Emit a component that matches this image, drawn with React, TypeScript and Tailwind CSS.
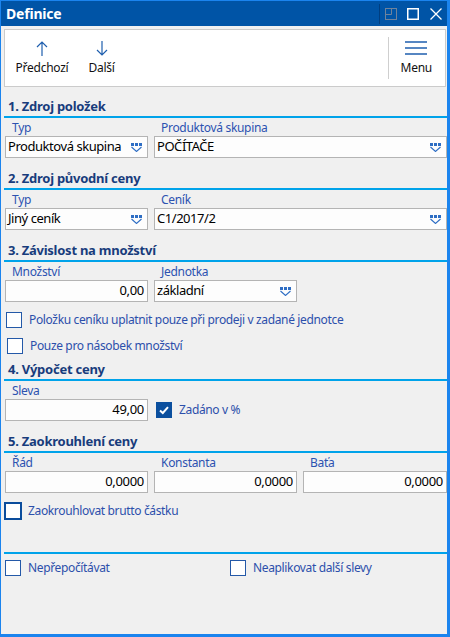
import React from "react";

const Heading = ({ title, className = "" }: { title: string; className?: string }) => (
  <div className={className}>
    <div className="h-[20px] pl-[4px] text-[13px] font-bold leading-[20px] tracking-[-0.25px] text-[#183c7c]">{title}</div>
    <div className="h-[2px] bg-[#00a3ea]" />
  </div>
);

const Label = ({ text }: { text: string }) => (
  <div className="h-[18px] pl-[7px] pt-[2px] text-[12px] leading-[16px] tracking-[-0.3px] text-[#2c52b0]">{text}</div>
);

const DropIcon = () => (
  <svg width="11" height="9" viewBox="0 0 11 9" className="shrink-0">
    <rect x="0" y="0" width="3" height="3" fill="#2d6dc4" />
    <rect x="4" y="0" width="3" height="3" fill="#2d6dc4" />
    <rect x="8" y="0" width="3" height="3" fill="#2d6dc4" />
    <polyline points="0.5,4 5.5,8.5 10.5,4" fill="none" stroke="#2d6dc4" strokeWidth="1.1" />
  </svg>
);

const Select = ({ value }: { value: string }) => (
  <div className="flex h-[22px] items-center justify-between border border-[#b4b4b4] bg-[#fdfdfd] pl-[2px] pr-[5px] text-[13px] tracking-[-0.45px] text-black">
    <span className="whitespace-nowrap">{value}</span>
    <DropIcon />
  </div>
);

const NumInput = ({ value }: { value: string }) => (
  <div className="flex h-[22px] items-center justify-end border border-[#b4b4b4] bg-[#fdfdfd] pr-[3px] text-[13px] tracking-[-0.3px] text-black">
    {value}
  </div>
);

const Check = ({
  label,
  checked = false,
  focused = false,
  className = "",
}: {
  label: string;
  checked?: boolean;
  focused?: boolean;
  className?: string;
}) => (
  <div className={`flex items-center ${className}`}>
    {checked ? (
      <div className="flex h-[16px] w-[16px] items-center justify-center bg-[#0b4f9e]">
        <svg width="12" height="12" viewBox="0 0 12 12">
          <polyline points="2,6.5 4.8,9 10,3.2" fill="none" stroke="white" strokeWidth="2" />
        </svg>
      </div>
    ) : focused ? (
      <div className="h-[18px] w-[18px] border-2 border-[#0a4c9c] bg-white" />
    ) : (
      <div className="h-[16px] w-[16px] border border-[#2459a8] bg-white" />
    )}
    <span
      className={`${focused ? "ml-[6px]" : "ml-[7px]"} whitespace-nowrap text-[12px] tracking-[-0.35px] text-[#2c4fab]`}
    >
      {label}
    </span>
  </div>
);

export default function App() {
  return (
    <div className="flex h-[637px] w-[450px] flex-col border-b-[3px] border-l border-r-[3px] border-t border-[#1b84ee] bg-[#f0f0f0] font-['Noto_Sans',sans-serif]">
      {/* Title bar */}
      <div className="flex h-[25px] items-center bg-[#0054a6]">
        <span className="pl-[5px] text-[14px] font-bold tracking-[-0.2px] text-white">Definice</span>
        <div className="ml-auto flex h-full items-center pr-[5px]">
          <div className="h-[20px] w-px bg-[#003e80]" />
          <svg width="12" height="12" viewBox="0 0 12 12" className="ml-[5px]">
            <rect x="0.5" y="0.5" width="11" height="11" fill="none" stroke="#6f839c" />
            <polyline points="6.5,0.5 6.5,6.5 0.5,6.5" fill="none" stroke="#6f839c" />
          </svg>
          <svg width="12" height="12" viewBox="0 0 12 12" className="ml-[10px]">
            <rect x="0.75" y="0.75" width="10.5" height="10.5" fill="none" stroke="white" strokeWidth="1.5" />
          </svg>
          <svg width="12" height="12" viewBox="0 0 12 12" className="ml-[11px]">
            <path d="M0.5 0.5 L11.5 11.5 M11.5 0.5 L0.5 11.5" stroke="white" strokeWidth="1.3" />
          </svg>
        </div>
      </div>

      <div className="flex flex-col pl-[3px]">
        {/* Toolbar */}
        <div className="mr-[1px] mt-[3px] flex h-[58px] items-center border border-[#cbcbcb] bg-white text-[12px] tracking-[-0.25px] text-[#111]">
          <div className="ml-[11px] flex w-[52px] flex-col items-center">
            <svg width="12" height="15" viewBox="0 0 12 15">
              <path d="M6 1 V15 M1 6 L6 1 L11 6" fill="none" stroke="#1f5fae" strokeWidth="1.2" />
            </svg>
            <span className="mt-[4px] leading-[16px]">Předchozí</span>
          </div>
          <div className="ml-[21px] flex w-[25px] flex-col items-center">
            <svg width="12" height="15" viewBox="0 0 12 15">
              <path d="M6 0 V14 M1 9 L6 14 L11 9" fill="none" stroke="#1f5fae" strokeWidth="1.2" />
            </svg>
            <span className="mt-[4px] leading-[16px]">Další</span>
          </div>
          <div className="ml-auto h-[42px] w-px bg-[#cfcfcf]" />
          <div className="ml-[12px] mr-[13px] flex flex-col items-center">
            <svg width="22" height="14" viewBox="0 0 22 14">
              <path d="M0 1 H22 M0 7 H22 M0 13 H22" stroke="#1f5fae" strokeWidth="1.5" />
            </svg>
            <span className="mt-[5px] leading-[16px]">Menu</span>
          </div>
        </div>

        {/* 1 */}
        <Heading title="1. Zdroj položek" className="mt-[9px]" />
        <div className="ml-[1px] grid grid-cols-[143px_293px] gap-x-[6px]">
          <Label text="Typ" />
          <Label text="Produktová skupina" />
          <Select value="Produktová skupina" />
          <Select value="POČÍTAČE" />
        </div>

        {/* 2 */}
        <Heading title="2. Zdroj původní ceny" className="mt-[10px]" />
        <div className="ml-[1px] grid grid-cols-[143px_293px] gap-x-[6px]">
          <Label text="Typ" />
          <Label text="Ceník" />
          <Select value="Jiný ceník" />
          <Select value="C1/2017/2" />
        </div>

        {/* 3 */}
        <Heading title="3. Závislost na množství" className="mt-[10px]" />
        <div className="ml-[1px] grid grid-cols-[143px_143px] gap-x-[6px]">
          <Label text="Množství" />
          <Label text="Jednotka" />
          <NumInput value="0,00" />
          <Select value="základní" />
        </div>
        <Check label="Položku ceníku uplatnit pouze při prodeji v zadané jednotce" className="ml-[2px] mt-[10px] h-[16px]" />
        <Check label="Pouze pro násobek množství" className="ml-[3px] mt-[10px] h-[16px]" />

        {/* 4 */}
        <Heading title="4. Výpočet ceny" className="mt-[5px]" />
        <div className="ml-[1px] grid grid-cols-[143px_1fr] gap-x-[6px]">
          <Label text="Sleva" />
          <div />
          <NumInput value="49,00" />
          <Check label="Zadáno v %" checked className="ml-[2px]" />
        </div>

        {/* 5 */}
        <Heading title="5. Zaokrouhlení ceny" className="mt-[10px]" />
        <div className="ml-[1px] grid grid-cols-[143px_143px_144px] gap-x-[6px]">
          <Label text="Řád" />
          <Label text="Konstanta" />
          <Label text="Baťa" />
          <NumInput value="0,0000" />
          <NumInput value="0,0000" />
          <NumInput value="0,0000" />
        </div>
        <Check label="Zaokrouhlovat brutto částku" focused className="mt-[9px] h-[18px]" />

        <div className="mt-[32px] h-[2px] bg-[#00a3ea]" />
        <div className="mt-[6px] flex h-[16px]">
          <Check label="Nepřepočítávat" className="ml-[1px] w-[225px]" />
          <Check label="Neaplikovat další slevy" />
        </div>
      </div>
    </div>
  );
}
